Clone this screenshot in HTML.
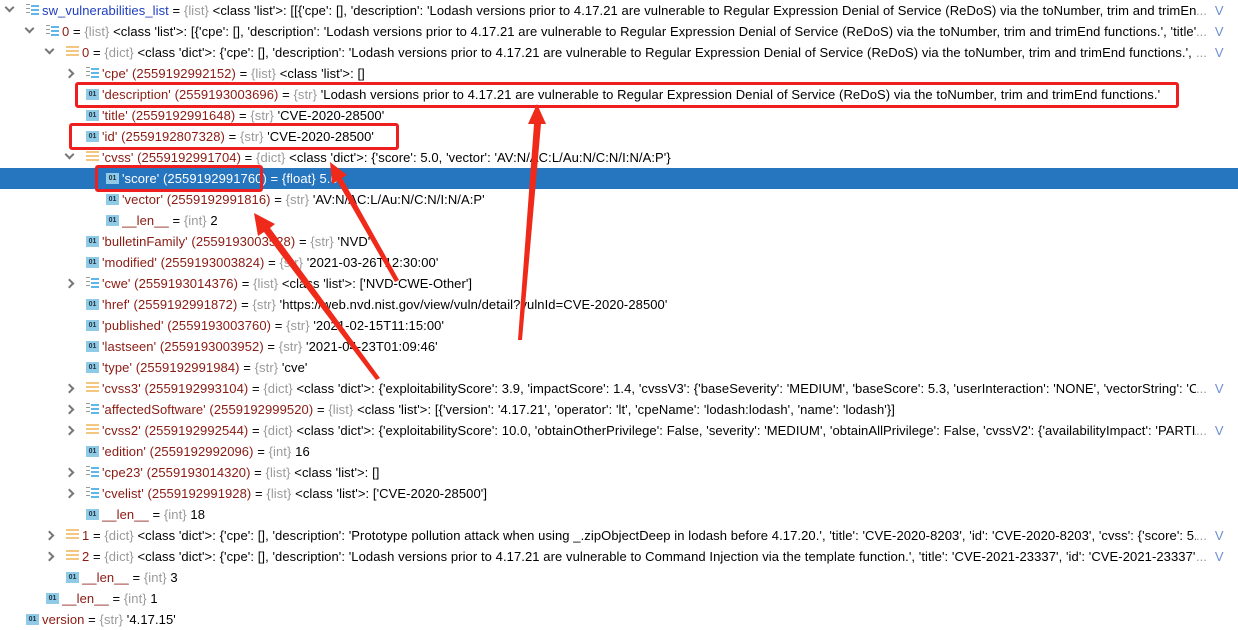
<!DOCTYPE html>
<html><head><meta charset="utf-8"><style>
*{margin:0;padding:0;box-sizing:border-box}
body{width:1238px;height:630px;overflow:hidden;background:#fff;font-family:"Liberation Sans","Noto Sans CJK SC",sans-serif;font-size:13px;color:#000;position:relative}
.r{position:absolute;left:0;width:1238px;height:21px;line-height:21px;white-space:nowrap}
.r.sel{background:#2675bf;color:#fff}
.r.sel .n,.r.sel .t{color:#fff}
.tx{position:absolute;top:0;overflow:hidden;letter-spacing:0.08px}
.n{color:#8a1a12}
.b{color:#1f3fbf}
.t{color:#9a9a9a}
.el{position:absolute;left:1196px;width:42px;height:21px;line-height:21px;background:#fff;color:#9a9a9a}
.el i{font-style:normal;color:#6a8fd0;margin-left:8px}
.ar{position:absolute;top:6px;width:7px;height:7px;border-right:2px solid #777;border-bottom:2px solid #777}
.ar.o{transform:rotate(45deg);top:4px}
.ar.c{transform:rotate(-45deg);top:7px}
.ic{position:absolute;top:4px;width:13px;height:12px}
.leaf{background:#8fcbe6;font-size:7px;font-weight:bold;color:#234;line-height:11px;text-align:center;top:5px;height:11px}
.dict{background:repeating-linear-gradient(#f3c77f 0 2px,#fff 2px 4px)}
.list{background:repeating-linear-gradient(#fff 0 1px,#5eb7e6 1px 3px,#fff 3px 4px);background-size:8px 12px;background-position:5px 0;background-repeat:no-repeat}
.list:before{content:"";position:absolute;left:0;top:0;width:4px;height:12px;background:repeating-linear-gradient(#999 0 1px,#fff 1px 4px)}
.box{position:absolute;border:3px solid #f01f1f;border-radius:3px}
</style></head><body>
<div id="rows"></div>
<script>
var R=[
[0,'o','list','<span class="b">sw_vulnerabilities_list</span> = <span class="t">{list}</span> &lt;class \'list\'&gt;: [[{\'cpe\': [], \'description\': \'Lodash versions prior to 4.17.21 are vulnerable to Regular Expression Denial of Service (ReDoS) via the toNumber, trim and trimEnd functions.\', \'title\': \'CVE\'',1],
[1,'o','list','<span class="n">0</span> = <span class="t">{list}</span> &lt;class \'list\'&gt;: [{\'cpe\': [], \'description\': \'Lodash versions prior to 4.17.21 are vulnerable to Regular Expression Denial of Service (ReDoS) via the toNumber, trim and trimEnd functions.\', \'title\': \'C',1],
[2,'o','dict','<span class="n">0</span> = <span class="t">{dict}</span> &lt;class \'dict\'&gt;: {\'cpe\': [], \'description\': \'Lodash versions prior to 4.17.21 are vulnerable to Regular Expression Denial of Service (ReDoS) via the toNumber, trim and trimEnd functions.\', \'title\': \'CVE',1],
[3,'c','list','<span class="n">\'cpe\' (2559192992152)</span> = <span class="t">{list}</span> &lt;class \'list\'&gt;: []'],
[3,'','leaf','<span class="n">\'description\' (2559193003696)</span> = <span class="t">{str}</span> \'Lodash versions prior to 4.17.21 are vulnerable to Regular Expression Denial of Service (ReDoS) via the toNumber, trim and trimEnd functions.\''],
[3,'','leaf','<span class="n">\'title\' (2559192991648)</span> = <span class="t">{str}</span> \'CVE-2020-28500\''],
[3,'','leaf','<span class="n">\'id\' (2559192807328)</span> = <span class="t">{str}</span> \'CVE-2020-28500\''],
[3,'o','dict','<span class="n">\'cvss\' (2559192991704)</span> = <span class="t">{dict}</span> &lt;class \'dict\'&gt;: {\'score\': 5.0, \'vector\': \'AV:N/AC:L/Au:N/C:N/I:N/A:P\'}'],
[4,'','leaf','<span class="n">\'score\' (2559192991760)</span> = <span class="t">{float}</span> 5.0',0,1],
[4,'','leaf','<span class="n">\'vector\' (2559192991816)</span> = <span class="t">{str}</span> \'AV:N/AC:L/Au:N/C:N/I:N/A:P\''],
[4,'','leaf','<span class="n">__len__</span> = <span class="t">{int}</span> 2'],
[3,'','leaf','<span class="n">\'bulletinFamily\' (2559193003528)</span> = <span class="t">{str}</span> \'NVD\''],
[3,'','leaf','<span class="n">\'modified\' (2559193003824)</span> = <span class="t">{str}</span> \'2021-03-26T12:30:00\''],
[3,'c','list','<span class="n">\'cwe\' (2559193014376)</span> = <span class="t">{list}</span> &lt;class \'list\'&gt;: [\'NVD-CWE-Other\']'],
[3,'','leaf','<span class="n">\'href\' (2559192991872)</span> = <span class="t">{str}</span> \'https://web.nvd.nist.gov/view/vuln/detail?vulnId=CVE-2020-28500\''],
[3,'','leaf','<span class="n">\'published\' (2559193003760)</span> = <span class="t">{str}</span> \'2021-02-15T11:15:00\''],
[3,'','leaf','<span class="n">\'lastseen\' (2559193003952)</span> = <span class="t">{str}</span> \'2021-04-23T01:09:46\''],
[3,'','leaf','<span class="n">\'type\' (2559192991984)</span> = <span class="t">{str}</span> \'cve\''],
[3,'c','dict','<span class="n">\'cvss3\' (2559192993104)</span> = <span class="t">{dict}</span> &lt;class \'dict\'&gt;: {\'exploitabilityScore\': 3.9, \'impactScore\': 1.4, \'cvssV3\': {\'baseSeverity\': \'MEDIUM\', \'baseScore\': 5.3, \'userInteraction\': \'NONE\', \'vectorString\': \'CVSS:3',1],
[3,'c','list','<span class="n">\'affectedSoftware\' (2559192999520)</span> = <span class="t">{list}</span> &lt;class \'list\'&gt;: [{\'version\': \'4.17.21\', \'operator\': \'lt\', \'cpeName\': \'lodash:lodash\', \'name\': \'lodash\'}]'],
[3,'c','dict','<span class="n">\'cvss2\' (2559192992544)</span> = <span class="t">{dict}</span> &lt;class \'dict\'&gt;: {\'exploitabilityScore\': 10.0, \'obtainOtherPrivilege\': False, \'severity\': \'MEDIUM\', \'obtainAllPrivilege\': False, \'cvssV2\': {\'availabilityImpact\': \'PARTIAL\', \'base',1],
[3,'','leaf','<span class="n">\'edition\' (2559192992096)</span> = <span class="t">{int}</span> 16'],
[3,'c','list','<span class="n">\'cpe23\' (2559193014320)</span> = <span class="t">{list}</span> &lt;class \'list\'&gt;: []'],
[3,'c','list','<span class="n">\'cvelist\' (2559192991928)</span> = <span class="t">{list}</span> &lt;class \'list\'&gt;: [\'CVE-2020-28500\']'],
[3,'','leaf','<span class="n">__len__</span> = <span class="t">{int}</span> 18'],
[2,'c','dict','<span class="n">1</span> = <span class="t">{dict}</span> &lt;class \'dict\'&gt;: {\'cpe\': [], \'description\': \'Prototype pollution attack when using _.zipObjectDeep in lodash before 4.17.20.\', \'title\': \'CVE-2020-8203\', \'id\': \'CVE-2020-8203\', \'cvss\': {\'score\': 5.8, \'vector',1],
[2,'c','dict','<span class="n">2</span> = <span class="t">{dict}</span> &lt;class \'dict\'&gt;: {\'cpe\': [], \'description\': \'Lodash versions prior to 4.17.21 are vulnerable to Command Injection via the template function.\', \'title\': \'CVE-2021-23337\', \'id\': \'CVE-2021-23337\', \'cvss\'',1],
[2,'','leaf','<span class="n">__len__</span> = <span class="t">{int}</span> 3'],
[1,'','leaf','<span class="n">__len__</span> = <span class="t">{int}</span> 1'],
[0,'','leaf','<span class="n">version</span> = <span class="t">{str}</span> \'4.17.15\'']
];
var h='';
R.forEach(function(r,i){
 var d=r[0],x=42+20*d;
 h+='<div class="r'+(r[5]?' sel':'')+'" style="top:'+(i*21)+'px">';
 if(r[1])h+='<div class="ar '+r[1]+'" style="left:'+(6+20*d)+'px"></div>';
 h+='<div class="ic '+r[2]+'" style="left:'+(26+20*d)+'px">'+(r[2]=='leaf'?'01':'')+'</div>';
 h+='<div class="tx" style="left:'+x+'px;right:'+(r[4]?42:0)+'px">'+r[3]+'</div>';
 h+='</div>';
 if(r[4])h+='<div class="el" style="top:'+(i*21)+'px">...<i>V</i></div>';
});
document.getElementById('rows').innerHTML=h;
</script>
<div class="box" style="left:75px;top:82px;width:1104px;height:26px"></div>
<div class="box" style="left:69px;top:123px;width:330px;height:27px"></div>
<div class="box" style="left:95px;top:165px;width:168px;height:27px"></div>
<svg style="position:absolute;left:0;top:0" width="1238" height="630">
<g fill="#f02a1a" stroke="none">
<polygon points="537,104 528,124 534,124 518,340 522,340 541,124 546,124"/>
<polygon points="330,162 332,184 337,181 395,282 399,280 342,178 347,175"/>
<polygon points="254,213 258,236 264,232 376,380 380,378 270,228 275,224"/>
</g>
</svg>
</body></html>
